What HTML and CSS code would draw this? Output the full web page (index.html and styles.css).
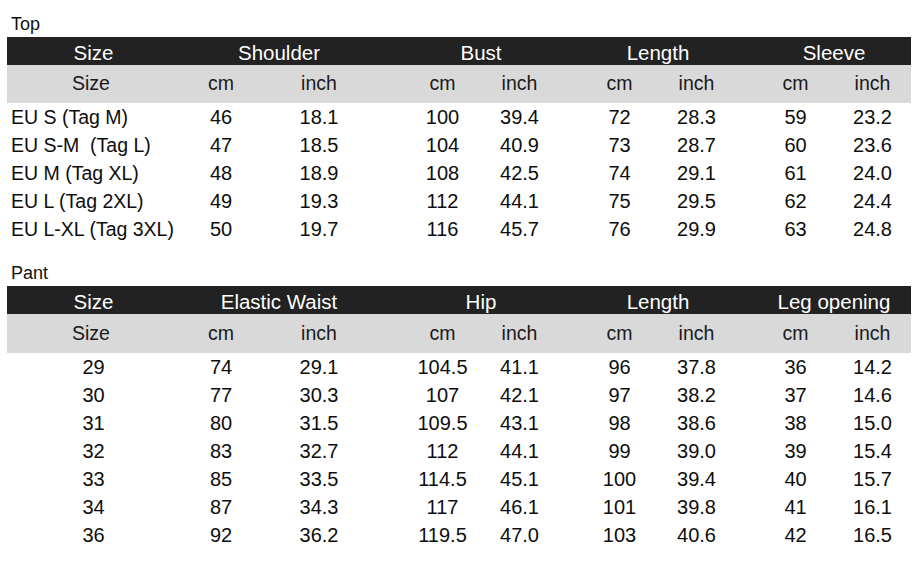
FILE: index.html
```html
<!DOCTYPE html>
<html>
<head>
<meta charset="utf-8">
<link rel="stylesheet" href="styles.css">
</head>
<body>
<section class="chart">
  <div class="title">Top</div>
  <div class="row head">
    <div>Size</div><div>Shoulder</div><div>Bust</div><div>Length</div><div>Sleeve</div>
  </div>
  <div class="row sub">
    <div>Size</div><div>cm</div><div>inch</div><div>cm</div><div>inch</div><div>cm</div><div>inch</div><div>cm</div><div>inch</div>
  </div>
  <div class="row data label-left">
    <div>EU S (Tag M)</div><div>46</div><div>18.1</div><div>100</div><div>39.4</div><div>72</div><div>28.3</div><div>59</div><div>23.2</div>
  </div>
  <div class="row data label-left">
    <div>EU S-M&nbsp; (Tag L)</div><div>47</div><div>18.5</div><div>104</div><div>40.9</div><div>73</div><div>28.7</div><div>60</div><div>23.6</div>
  </div>
  <div class="row data label-left">
    <div>EU M (Tag XL)</div><div>48</div><div>18.9</div><div>108</div><div>42.5</div><div>74</div><div>29.1</div><div>61</div><div>24.0</div>
  </div>
  <div class="row data label-left">
    <div>EU L (Tag 2XL)</div><div>49</div><div>19.3</div><div>112</div><div>44.1</div><div>75</div><div>29.5</div><div>62</div><div>24.4</div>
  </div>
  <div class="row data label-left">
    <div>EU L-XL (Tag 3XL)</div><div>50</div><div>19.7</div><div>116</div><div>45.7</div><div>76</div><div>29.9</div><div>63</div><div>24.8</div>
  </div>
</section>

<section class="chart chart-pant">
  <div class="title">Pant</div>
  <div class="row head">
    <div>Size</div><div>Elastic Waist</div><div>Hip</div><div>Length</div><div>Leg opening</div>
  </div>
  <div class="row sub sub-tall">
    <div>Size</div><div>cm</div><div>inch</div><div>cm</div><div>inch</div><div>cm</div><div>inch</div><div>cm</div><div>inch</div>
  </div>
  <div class="row data label-center">
    <div>29</div><div>74</div><div>29.1</div><div>104.5</div><div>41.1</div><div>96</div><div>37.8</div><div>36</div><div>14.2</div>
  </div>
  <div class="row data label-center">
    <div>30</div><div>77</div><div>30.3</div><div>107</div><div>42.1</div><div>97</div><div>38.2</div><div>37</div><div>14.6</div>
  </div>
  <div class="row data label-center">
    <div>31</div><div>80</div><div>31.5</div><div>109.5</div><div>43.1</div><div>98</div><div>38.6</div><div>38</div><div>15.0</div>
  </div>
  <div class="row data label-center">
    <div>32</div><div>83</div><div>32.7</div><div>112</div><div>44.1</div><div>99</div><div>39.0</div><div>39</div><div>15.4</div>
  </div>
  <div class="row data label-center">
    <div>33</div><div>85</div><div>33.5</div><div>114.5</div><div>45.1</div><div>100</div><div>39.4</div><div>40</div><div>15.7</div>
  </div>
  <div class="row data label-center">
    <div>34</div><div>87</div><div>34.3</div><div>117</div><div>46.1</div><div>101</div><div>39.8</div><div>41</div><div>16.1</div>
  </div>
  <div class="row data label-center">
    <div>36</div><div>92</div><div>36.2</div><div>119.5</div><div>47.0</div><div>103</div><div>40.6</div><div>42</div><div>16.5</div>
  </div>
</section>
</body>
</html>
```

FILE: styles.css
```css
html, body {
  margin: 0;
  padding: 0;
  background: #ffffff;
}

body {
  font-family: "Liberation Sans", Arial, sans-serif;
  color: #111111;
  padding: 12px 9px 0 7px;
}

.chart-pant {
  margin-top: 18px;
}

.title {
  font-size: 18px;
  line-height: 25px;
  height: 25px;
  padding-left: 4px;
}

.row {
  display: grid;
  grid-template-columns: 165px 98px 98px 36px 77px 77px 23px 77px 77px 22px 77px 77px;
  width: 904px;
  text-align: center;
  white-space: nowrap;
}

/* group header (dark bar) */
.head {
  background: #222222;
  color: #ffffff;
  font-size: 20.5px;
  height: 28px;
  line-height: 25px;
  padding-top: 3px;
  box-sizing: border-box;
}
.head > :nth-child(1) { grid-column: 1; padding-left: 8px; }
.head > :nth-child(2) { grid-column: 2 / span 2; padding-left: 18px; }
.head > :nth-child(3) { grid-column: 5 / span 2; }
.head > :nth-child(4) { grid-column: 8 / span 2; }
.head > :nth-child(5) { grid-column: 11 / span 2; }

/* unit sub header (grey bar) */
.sub {
  background: #d9d9d9;
  color: #1a1a1a;
  font-size: 19.5px;
  height: 38px;
  line-height: 37px;
}
.sub-tall {
  height: 39px;
  line-height: 38px;
}
.sub > :nth-child(1) { padding-left: 3px; }

.sub > :nth-child(4),
.data > :nth-child(4) { grid-column: 5; }
.sub > :nth-child(6),
.data > :nth-child(6) { grid-column: 8; }
.sub > :nth-child(8),
.data > :nth-child(8) { grid-column: 11; }

/* data rows */
.data {
  font-size: 20px;
  height: 28px;
  line-height: 28px;
  color: #0d0d0d;
}

.label-left > :nth-child(1) {
  text-align: left;
  padding-left: 4px;
  font-size: 19.5px;
}

.label-center > :nth-child(1) {
  padding-left: 8px;
}
```
